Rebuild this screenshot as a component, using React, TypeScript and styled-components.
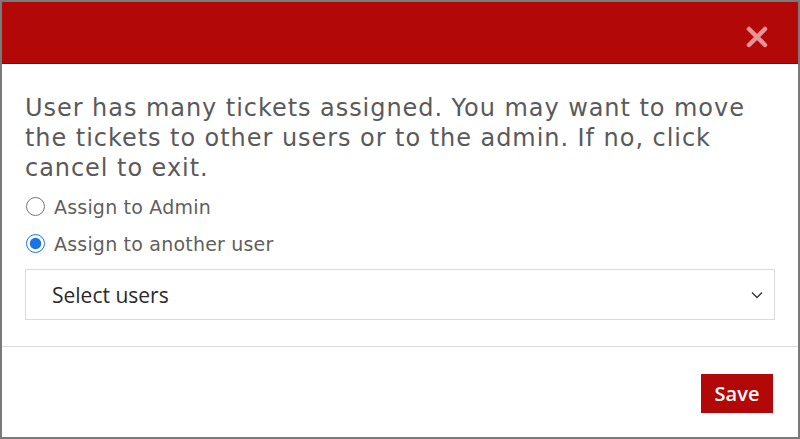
import React from "react";
import styled, { createGlobalStyle } from "styled-components";

const Global = createGlobalStyle`
  html, body { margin: 0; padding: 0; background: #fff; }
  * { box-sizing: border-box; }
`;

const Frame = styled.div`
  width: 800px;
  height: 439px;
  border: 2px solid #7a7a7a;
  display: flex;
  flex-direction: column;
  background: #fff;
  font-family: "DejaVu Sans", Verdana, sans-serif;
`;

const Header = styled.div`
  height: 62px;
  background: #b30808;
  border-bottom: 1px solid #8a0606;
  display: flex;
  align-items: center;
  justify-content: flex-end;
  padding-right: 28px;
  flex-shrink: 0;
`;

const CloseButton = styled.button`
  border: none;
  background: transparent;
  padding: 0;
  margin-top: 8px;
  width: 26px;
  height: 26px;
  display: flex;
  align-items: center;
  justify-content: center;
  cursor: pointer;
`;

const Body = styled.div`
  padding: 29px 23px 26px 23px;
  display: flex;
  flex-direction: column;
  border-bottom: 1px solid #dcdcdc;
`;

const Message = styled.p`
  margin: 0 0 5px 0;
  font-size: 24px;
  line-height: 30px;
  color: #5a5a5a;
  letter-spacing: 0.95px;
`;

const RadioRow = styled.label`
  display: flex;
  align-items: center;
  gap: 9px;
  height: 37px;
  font-size: 19px;
  color: #5f5f5f;
  padding-left: 1px;
  letter-spacing: 0.2px;
`;

const Radio = styled.input`
  margin: 0;
  width: 19px;
  height: 19px;
  accent-color: #1a73e8;
`;

const SelectBox = styled.div`
  margin-top: 7px;
  height: 51px;
  border: 1px solid #dadada;
  display: flex;
  align-items: center;
  justify-content: space-between;
  padding: 0 10px 0 26px;
  font-family: "Open Sans", "Noto Sans", sans-serif;
  font-size: 21px;
  color: #2a2a2a;
`;

const Footer = styled.div`
  flex: 1;
  display: flex;
  justify-content: flex-end;
  align-items: flex-start;
  padding: 27px 25px 0 0;
`;

const SaveButton = styled.button`
  background: #b30808;
  color: #fff;
  border: none;
  width: 72px;
  height: 39px;
  font-family: "Open Sans", "Noto Sans", sans-serif;
  font-size: 20px;
  font-weight: 600;
  padding: 0;
  cursor: pointer;
`;

export default function App() {
  return (
    <>
      <Global />
      <Frame>
        <Header>
          <CloseButton aria-label="close">
            <svg width="24" height="24" viewBox="0 0 24 24">
              <path d="M4 4 L20 20 M20 4 L4 20" stroke="#e8939a" strokeWidth="4.5" strokeLinecap="round" />
            </svg>
          </CloseButton>
        </Header>
        <Body>
          <Message>
            User has many tickets assigned. You may want to move the tickets to other users or to the admin. If no, click cancel to exit.
          </Message>
          <RadioRow>
            <Radio type="radio" name="assign" />
            Assign to Admin
          </RadioRow>
          <RadioRow>
            <Radio type="radio" name="assign" defaultChecked />
            Assign to another user
          </RadioRow>
          <SelectBox>
            <span>Select users</span>
            <svg width="14" height="14" viewBox="0 0 14 14">
              <path d="M2 4.5 L7 9.5 L12 4.5" stroke="#333" strokeWidth="1.3" fill="none" />
            </svg>
          </SelectBox>
        </Body>
        <Footer>
          <SaveButton>Save</SaveButton>
        </Footer>
      </Frame>
    </>
  );
}
